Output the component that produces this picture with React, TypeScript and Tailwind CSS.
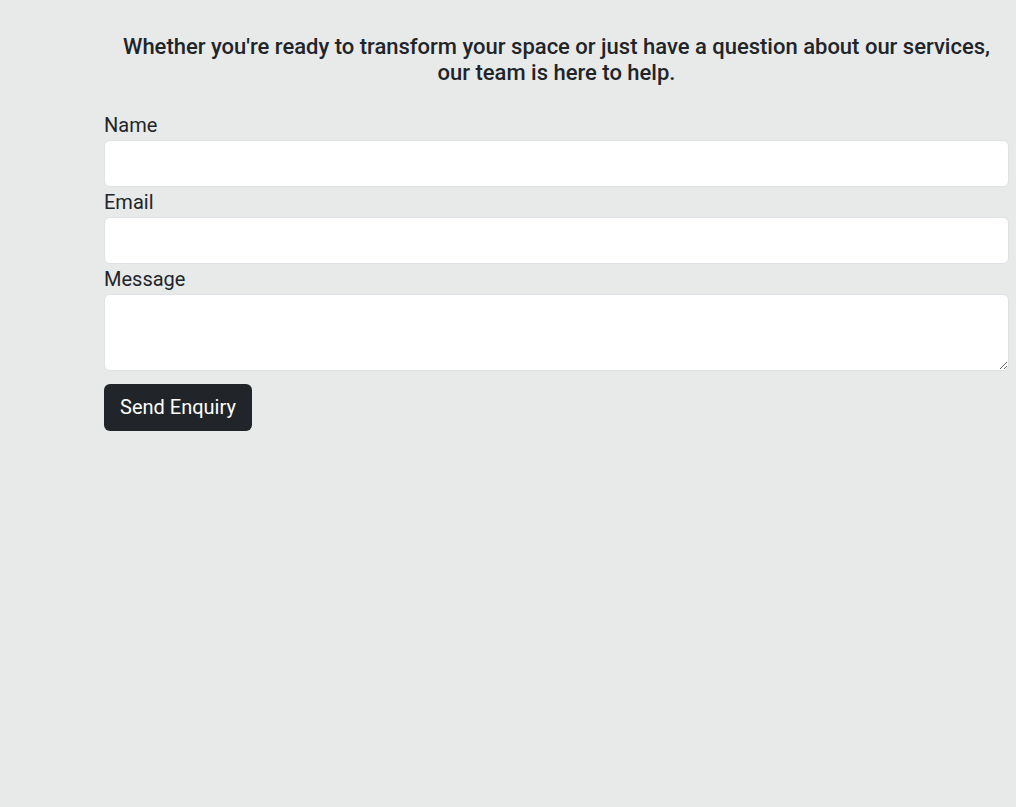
export default function App() {
  return (
    <div
      className="min-h-[807px] w-full bg-[#e8eaea] text-[#212529]"
      style={{ fontFamily: 'Roboto, "Liberation Sans", sans-serif' }}
    >
      <div className="ml-[104px] w-[905px] pt-[34px]">
        <p className="text-center text-[22px] font-medium leading-[26px]">
          Whether you're ready to transform your space or just have a question about our services,
          <br />
          our team is here to help.
        </p>

        <form className="mt-[24px] flex flex-col" onSubmit={(e) => e.preventDefault()}>
          <label className="text-[20px] leading-[30px]">Name</label>
          <input
            type="text"
            className="h-[47px] w-full rounded-[6px] border border-[#dee2e6] bg-white px-3 text-[20px] outline-none"
          />
          <label className="text-[20px] leading-[30px]">Email</label>
          <input
            type="email"
            className="h-[47px] w-full rounded-[6px] border border-[#dee2e6] bg-white px-3 text-[20px] outline-none"
          />
          <label className="text-[20px] leading-[30px]">Message</label>
          <textarea className="h-[77px] w-full rounded-[6px] border border-[#dee2e6] bg-white px-3 text-[20px] outline-none" />
          <div className="mt-[13px]">
            <button
              type="submit"
              className="h-[47px] rounded-[6px] bg-[#212529] px-4 pb-[2px] text-[20px] text-white"
            >
              Send Enquiry
            </button>
          </div>
        </form>
      </div>
    </div>
  )
}
